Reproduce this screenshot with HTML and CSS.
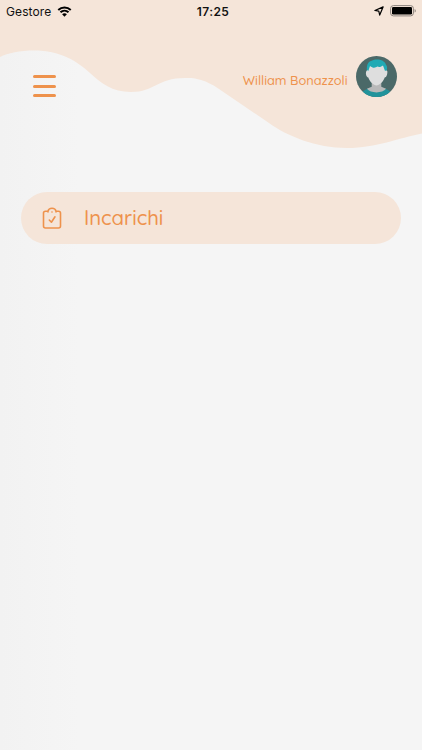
FILE: index.html
```html
<!DOCTYPE html>
<html lang="it">

<head>
    <meta charset="UTF-8">
    <meta name="viewport" content="width=device-width, initial-scale=1">
    <title>Incarichi</title>
    <link rel="stylesheet" href="styles.css">
</head>

<body>
    <svg class="wave" viewBox="0 0 422 150" aria-hidden="true">
        <path d="M0 0H422V133.500C398 138 377 148 347 148C316 148 287 136 269 123L219 89C203 78 193 78 185 78C157 78 155 92 131 92C112 92 101 83 90 73C77 61 60 50.500 34 50.500C20 50.500 8 53 0 57Z"/>
    </svg>

    <div class="status-bar">
        <div class="status-left">
            <span class="carrier">Gestore</span>
            <svg class="wifi" width="15" height="11" viewBox="0 0 16 12">
                <path d="M1.200 4.300C5 .8 11 .8 14.800 4.300M3.600 6.800C6.100 4.500 9.900 4.500 12.400 6.800" fill="none" stroke="#000" stroke-width="2.200"/>
                <path d="M5.400 9C6.900 7.700 9.100 7.700 10.600 9L8 11.700Z"/>
            </svg>
        </div>
        <span class="time">17:25</span>
        <div class="status-right">
            <svg width="10" height="10" viewBox="0 0 10 10">
                <path d="M9.100 .9L.9 4.500L4.800 5.200L5.700 9.100Z" fill="none" stroke="#000" stroke-width="1.200" stroke-linejoin="round"/>
            </svg>
            <svg width="27" height="12" viewBox="0 0 27 12">
                <rect x=".6" y=".6" width="22.800" height="10.300" rx="2.800" fill="none" stroke="#8c837d"/>
                <rect x="2" y="2" width="20" height="7.500" rx="1.300"/>
                <path d="M24.600 3.900C26.200 4.600 26.200 6.900 24.600 7.600Z" fill="#8c837d"/>
            </svg>
        </div>
    </div>

    <div class="header">
        <button class="menu-button" aria-label="Menu">
            <span></span>
            <span></span>
            <span></span>
        </button>
        <div class="user">
            <span class="user-name">William Bonazzoli</span>
            <svg class="avatar" viewBox="0 0 60 60">
                <clipPath id="circle">
                    <circle cx="30" cy="30" r="30"/>
                </clipPath>
                <g clip-path="url(#circle)">
                    <rect width="60" height="60" fill="#4b6968"/>
                    <path d="M5 60C7 51 14 49 23 46H37C46 49 53 51 55 60Z" fill="#21939b"/>
                    <path d="M23 36H37V45L44 48C39 55 21 55 16 48L23 45Z" fill="#b9b9b9"/>
                    <path d="M17 27C14 15 17 8 23 7C29 3 42 5 44 13C47 16 45 22 43 27Z" fill="#20aab4"/>
                    <path d="M18 22L20.500 14.500C25 18.500 29 17 31 15.500C34 17 37 16 39.500 14L42.500 22C46 20 46.500 23 45.500 27C44.500 31 43 31 42 31.500C40 38 34 43 30 43C26 43 20 38 18 31.500C16.500 31 15 30 14.500 26C14.500 21 17 20 18 22Z" fill="#dedede"/>
                </g>
            </svg>
        </div>
    </div>

    <div class="container">
        <a class="menu-item" href="#">
            <svg class="clipboard" width="20" height="23" viewBox="0 0 20 23">
                <path d="M6 5V4.200H3.500C2 4.200 1.500 4.800 1.500 6V19C1.500 20.400 2 21 3.500 21H16.500C18 21 18.500 20.400 18.500 19V6C18.500 4.800 18 4.200 16.500 4.200H14V5M6 4.200C6.400 2.200 8 1.200 10 1.200C12 1.200 13.600 2.200 14 4.200M7.300 13L9.400 15.200L13 9.800"/>
                <circle class="dot" cx="10" cy="5" r=".8"/>
            </svg>
            <span class="item-label">Incarichi</span>
        </a>
    </div>
</body>

</html>
```
FILE: styles.css
```css
* {
    box-sizing: border-box;
}

body {
    margin: 0;
    min-height: 750px;
    background: linear-gradient(90deg, #f2f2f2 0, #f5f5f5 80px);
    font-family: Quicksand, Inter, sans-serif;
    color: #ee924c;
}

.wave {
    display: block;
    position: absolute;
    top: 0;
    left: 0;
    width: 422px;
    height: 150px;
    z-index: -1;
    fill: #f5e5d9;
}

.status-bar {
    display: grid;
    grid-template-columns: 1fr auto 1fr;
    align-items: center;
    height: 22px;
    padding: 0 5px 0 6px;
    color: #111;
    font-family: Inter, sans-serif;
    font-size: 12px;
}

.status-left,
.status-right {
    display: flex;
    align-items: center;
    gap: 6px;
}

.carrier {
    letter-spacing: 0.1px;
}

.status-right {
    justify-content: flex-end;
}

.time {
    padding-left: 3px;
    font-weight: 600;
    letter-spacing: 0.4px;
}

.header {
    display: flex;
    justify-content: space-between;
    height: 170px;
    padding: 33px 25.500px 0 33px;
}

.menu-button {
    display: flex;
    flex-direction: column;
    gap: 6.500px;
    width: 23px;
    height: 22px;
    margin-top: 20px;
    padding: 0;
    border: 0;
    background: none;
}

.menu-button span {
    width: 23px;
    height: 3px;
    border-radius: 2px;
    background-color: #ee924c;
}

.user {
    display: flex;
    align-items: center;
    gap: 8px;
    height: 43px;
}

.user-name {
    padding-top: 6px;
    font-size: 12.800px;
    font-weight: 500;
}

.avatar {
    width: 41px;
    height: 41px;
}

.container {
    padding: 0 21px;
}

.menu-item {
    display: flex;
    align-items: center;
    height: 52px;
    padding-left: 21px;
    border-radius: 26px;
    background-color: #f5e5d9;
    color: #ee924c;
    text-decoration: none;
}

.clipboard {
    margin-right: 22px;
    fill: none;
    stroke: #ee924c;
    stroke-width: 1.600;
    stroke-linecap: round;
    stroke-linejoin: round;
}

.clipboard .dot {
    fill: #ee924c;
    stroke: none;
}

.item-label {
    padding-bottom: 1px;
    font-size: 20.300px;
    font-weight: 500;
}
```
